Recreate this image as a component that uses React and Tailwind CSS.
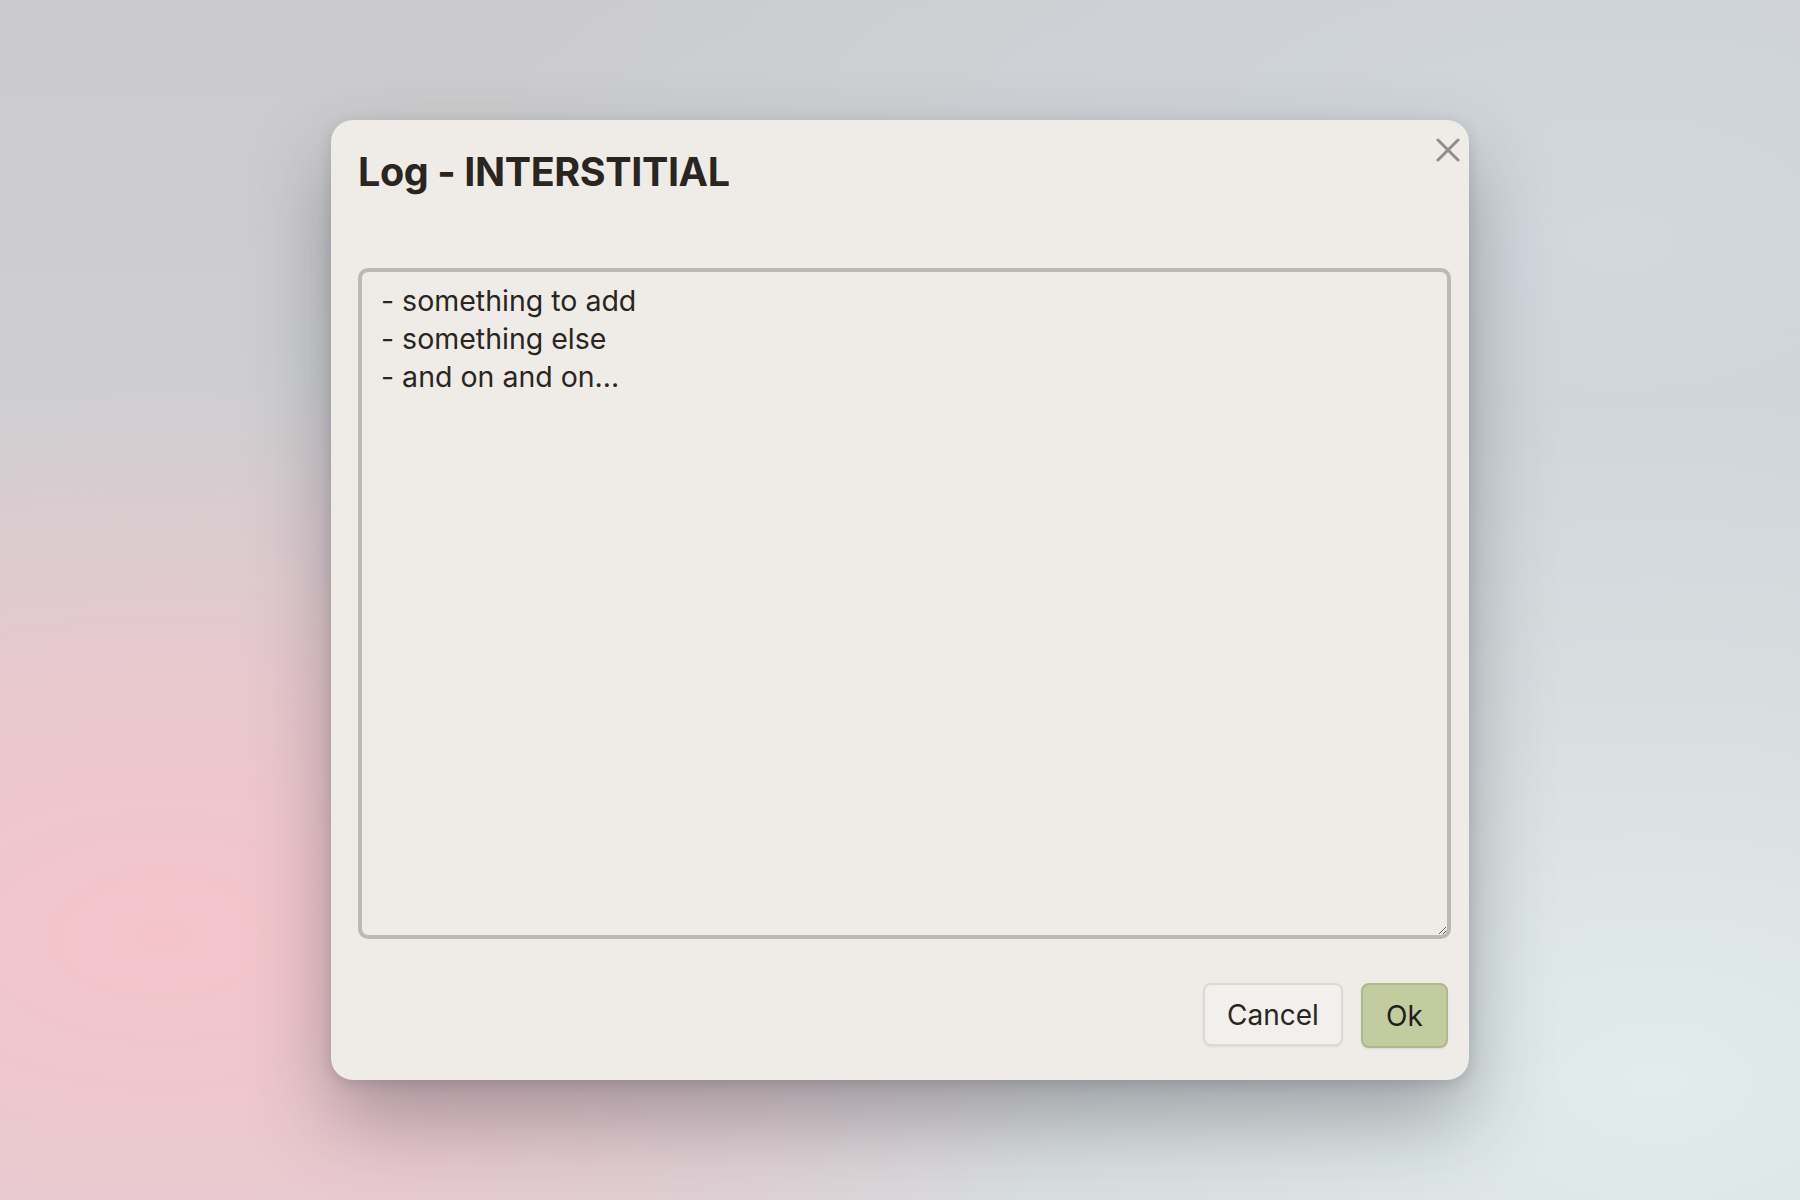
import React from "react";

function CloseIcon() {
  return (
    <svg width="24" height="24" viewBox="0 0 24 24" fill="none">
      <path d="M2 2 22 22M22 2 2 22" stroke="#8e8e8c" strokeWidth="3" strokeLinecap="round" />
    </svg>
  );
}

export default function App() {
  const log = "- something to add\n- something else\n- and on and on...";

  return (
    <div
      className="w-full h-screen flex items-center justify-center bg-[#cfd0d3] bg-[radial-gradient(ellipse_at_9%_78%,#f5c4cb_0%,rgba(245,196,203,0.65)_20%,rgba(245,196,203,0)_42%),radial-gradient(ellipse_at_92%_90%,#e2ecec_0%,rgba(226,236,236,0)_45%),radial-gradient(ellipse_at_90%_20%,#d1d8de_0%,rgba(209,216,222,0)_50%),linear-gradient(180deg,#cbcbcd_0%,#d3d5d8_100%)]"
      style={{ fontFamily: "Inter, 'Noto Sans', sans-serif" }}
    >
      {/* Dialog */}
      <div className="relative w-[1138px] h-[960px] bg-[#efece7] rounded-[22px] shadow-[0_40px_80px_rgba(55,58,66,0.38),0_4px_14px_rgba(60,60,70,0.18)] flex flex-col pl-[27px] pr-[18px] pt-[28px] pb-[32px]">
        <button className="absolute top-[18px] right-[9px] p-0">
          <CloseIcon />
        </button>

        <h1 className="text-[39.5px] leading-[48px] font-bold text-[#2b251f] tracking-[-0.4px]">
          Log - INTERSTITIAL
        </h1>

        <textarea
          defaultValue={log}
          spellCheck={false}
          className="mt-[72px] w-[1093px] h-[671px] bg-[#efece7] border-[4px] border-[#bab9b6] rounded-[10px] px-[19px] pt-[10px] text-[28.5px] leading-[38px] text-[#2b251f] outline-none resize"
        />

        <div className="mt-auto flex justify-end gap-[18px] pr-[3px]">
          <button className="w-[140px] h-[63px] rounded-[8px] bg-[#f2f0ec] border-2 border-[#dcd9d3] shadow-[0_1px_2px_rgba(0,0,0,0.08)] text-[28px] text-[#2b251f]">
            Cancel
          </button>
          <button className="w-[87px] h-[65px] rounded-[8px] bg-[#c3cc9f] border-2 border-[#aeb78d] shadow-[0_1px_2px_rgba(0,0,0,0.08)] text-[28px] text-[#1f1d18]">
            Ok
          </button>
        </div>
      </div>
    </div>
  );
}
